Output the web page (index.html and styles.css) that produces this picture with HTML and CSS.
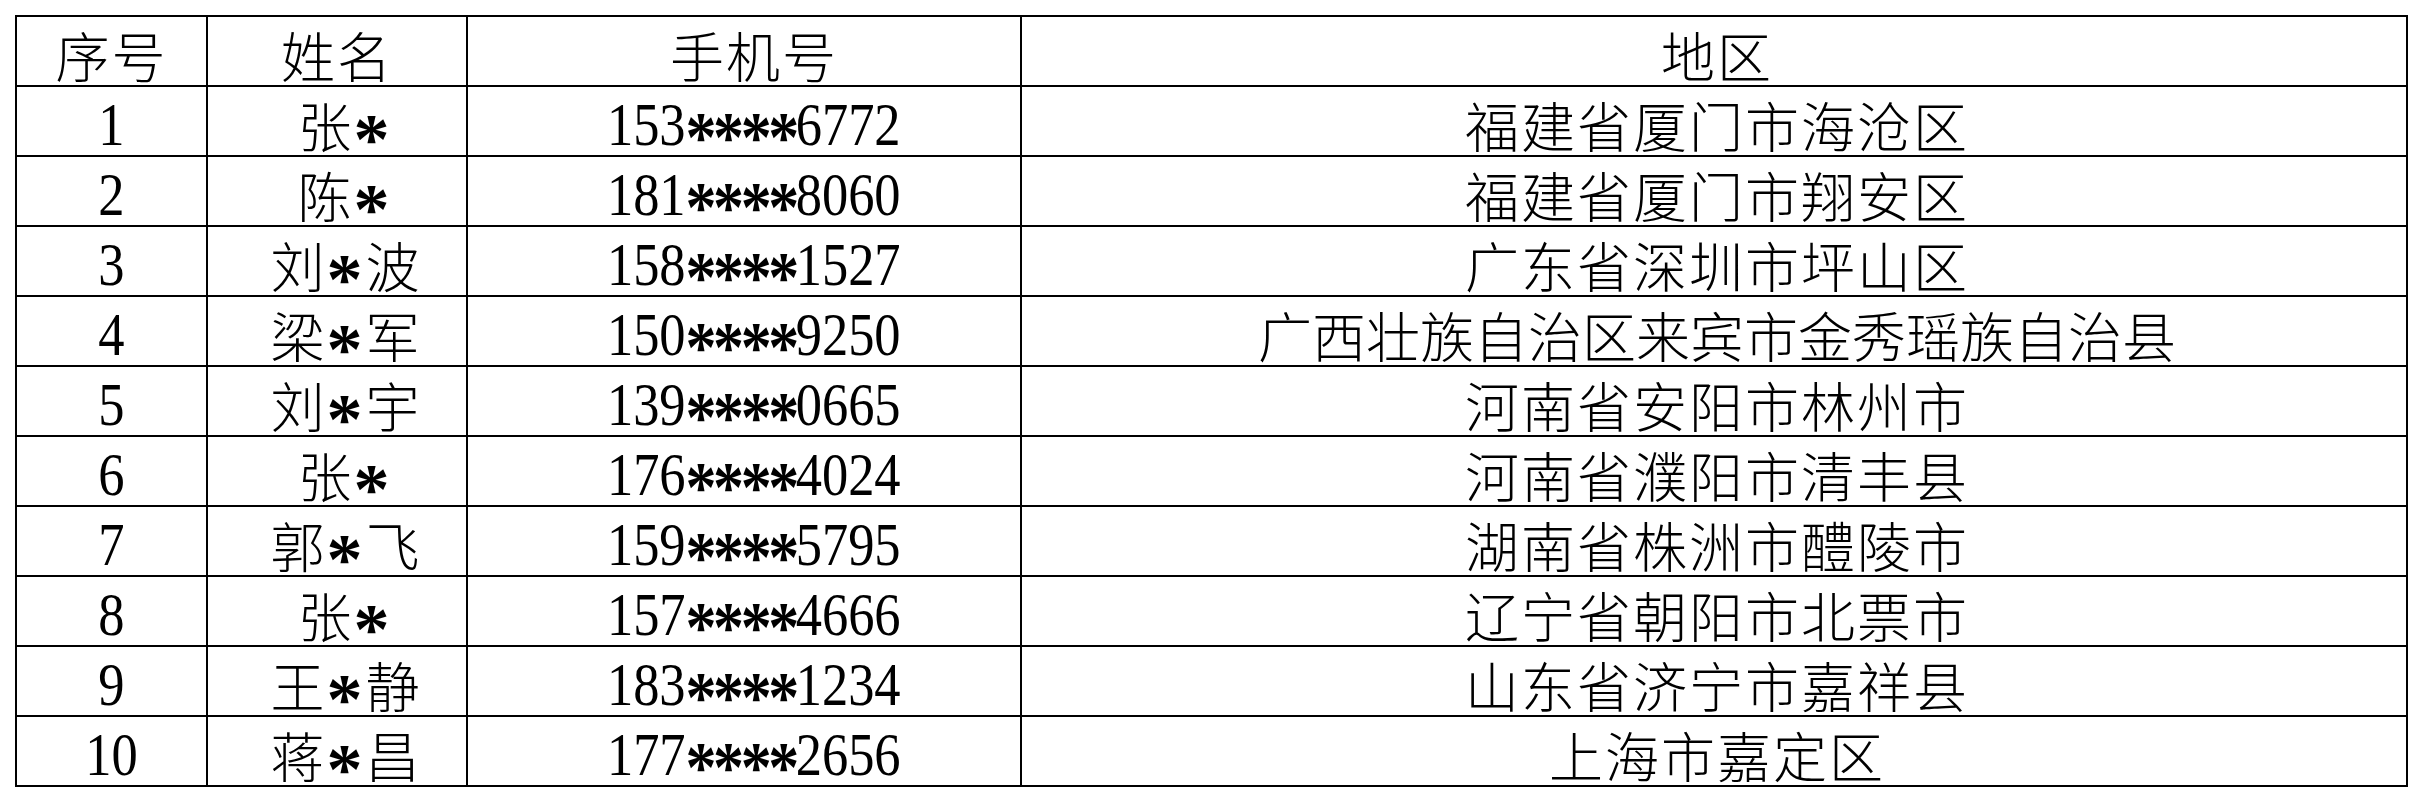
FILE: index.html
```html
<!DOCTYPE html>
<html lang="zh-CN">
<head>
<meta charset="utf-8">
<title>名单</title>
<link rel="stylesheet" href="styles.css">
</head>
<body>
<table class="sheet">
  <colgroup>
    <col class="c-no">
    <col class="c-name">
    <col class="c-phone">
    <col class="c-area">
  </colgroup>
  <thead>
    <tr>
      <th class="cn">序号</th>
      <th class="cn name-h">姓名</th>
      <th class="cn phone-h">手机号</th>
      <th class="cn area">地区</th>
    </tr>
  </thead>
  <tbody>
    <tr><td class="num"><span class="nx">1</span></td><td class="cn name">张<span class="ast">*</span></td><td class="phone"><span class="nx">153<span class="ast">****</span>6772</span></td><td class="cn area">福建省厦门市海沧区</td></tr>
    <tr><td class="num"><span class="nx">2</span></td><td class="cn name">陈<span class="ast">*</span></td><td class="phone"><span class="nx">181<span class="ast">****</span>8060</span></td><td class="cn area">福建省厦门市翔安区</td></tr>
    <tr><td class="num"><span class="nx">3</span></td><td class="cn name">刘<span class="ast">*</span>波</td><td class="phone"><span class="nx">158<span class="ast">****</span>1527</span></td><td class="cn area">广东省深圳市坪山区</td></tr>
    <tr><td class="num"><span class="nx">4</span></td><td class="cn name">梁<span class="ast">*</span>军</td><td class="phone"><span class="nx">150<span class="ast">****</span>9250</span></td><td class="cn area long">广西壮族自治区来宾市金秀瑶族自治县</td></tr>
    <tr><td class="num"><span class="nx">5</span></td><td class="cn name">刘<span class="ast">*</span>宇</td><td class="phone"><span class="nx">139<span class="ast">****</span>0665</span></td><td class="cn area">河南省安阳市林州市</td></tr>
    <tr><td class="num"><span class="nx">6</span></td><td class="cn name">张<span class="ast">*</span></td><td class="phone"><span class="nx">176<span class="ast">****</span>4024</span></td><td class="cn area">河南省濮阳市清丰县</td></tr>
    <tr><td class="num"><span class="nx">7</span></td><td class="cn name">郭<span class="ast">*</span>飞</td><td class="phone"><span class="nx">159<span class="ast">****</span>5795</span></td><td class="cn area">湖南省株洲市醴陵市</td></tr>
    <tr><td class="num"><span class="nx">8</span></td><td class="cn name">张<span class="ast">*</span></td><td class="phone"><span class="nx">157<span class="ast">****</span>4666</span></td><td class="cn area">辽宁省朝阳市北票市</td></tr>
    <tr><td class="num"><span class="nx">9</span></td><td class="cn name">王<span class="ast">*</span>静</td><td class="phone"><span class="nx">183<span class="ast">****</span>1234</span></td><td class="cn area">山东省济宁市嘉祥县</td></tr>
    <tr><td class="num"><span class="nx">10</span></td><td class="cn name">蒋<span class="ast">*</span>昌</td><td class="phone"><span class="nx">177<span class="ast">****</span>2656</span></td><td class="cn area">上海市嘉定区</td></tr>
  </tbody>
</table>
</body>
</html>
```
FILE: styles.css
```css
html, body {
  margin: 0;
  background: #ffffff;
}
body {
  padding: 15px 0 0 15px;
  color: #000000;
}
.sheet {
  border-collapse: collapse;
  table-layout: fixed;
  width: 2393px;
}
.c-no { width: 191px; }
.c-name { width: 260px; }
.c-phone { width: 554px; }
.c-area { width: 1386px; }

.sheet th,
.sheet td {
  border: 2px solid #000000;
  height: 70px;
  padding: 7px 0 0 0;
  box-sizing: border-box;
  text-align: center;
  vertical-align: middle;
  line-height: 60px;
  font-weight: normal;
  white-space: nowrap;
}
.cn {
  font-family: "Noto Sans CJK SC", "Noto Sans", sans-serif;
  font-size: 54px;
  letter-spacing: 2px;
}
.sheet th.cn,
.sheet td.cn { font-weight: 300; }
.sheet td.name { padding-left: 16px; letter-spacing: 0; }
.sheet th.name-h { padding-left: 0; }
.sheet th.phone-h { padding-left: 20px; }
.sheet th.area,
.sheet td.area { padding-left: 6px; }
.sheet td.area.long { letter-spacing: 0; }

.num,
.phone {
  font-family: "Liberation Serif", "Times New Roman", serif;
  font-size: 61px;
}
.sheet td.phone { padding-left: 20px; }
.nx {
  display: inline-block;
  transform: scaleX(0.86);
  transform-origin: 50% 50%;
}
.ast {
  font-family: "Liberation Serif", "Times New Roman", serif;
  font-weight: bold;
  font-size: 72px;
  letter-spacing: -4px;
  vertical-align: -0.22em;
  line-height: 0;
}
.name .ast { margin: 0 3px 0 2px; letter-spacing: 0; }
```
